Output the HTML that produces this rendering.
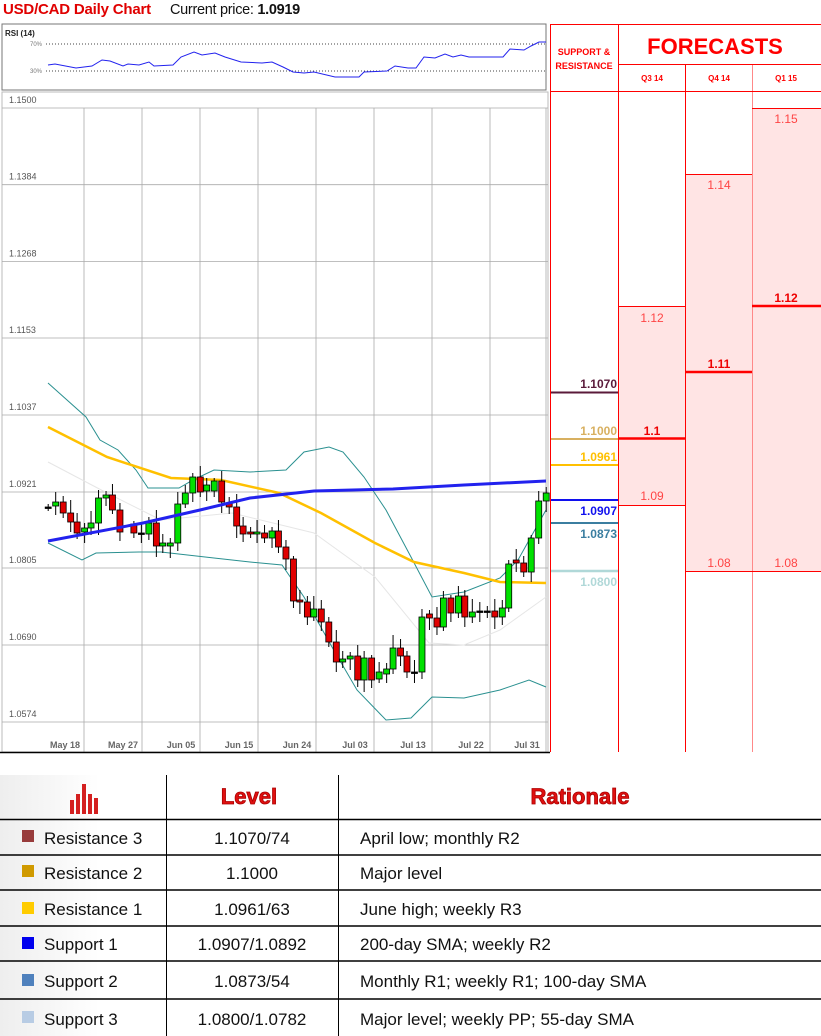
<!DOCTYPE html>
<html><head><meta charset="utf-8"><style>
body{margin:0;width:821px;height:1036px;background:#fff;position:relative;overflow:hidden;font-family:"Liberation Sans",sans-serif}
.a{position:absolute}
.nar{font-family:"Liberation Sans Narrow","Liberation Sans",sans-serif}
</style></head><body>
<div class="a" style="left:3px;top:1px;font-size:15px;font-weight:bold;color:#e00000;letter-spacing:-0.2px" >USD/CAD Daily Chart</div>
<div class="a" style="left:170px;top:2px;font-size:14.5px;color:#111;letter-spacing:-0.3px">Current price: <b>1.0919</b></div>

<svg class="a" style="left:0;top:0" width="821" height="760" id="s">
<rect x="2" y="24" width="544" height="66" fill="#fff" stroke="#777" stroke-width="1"/>
<text x="5" y="36" font-size="8" font-weight="bold" fill="#222">RSI (14)</text>
<text x="30" y="46" font-size="6" fill="#777">70%</text>
<text x="30" y="73" font-size="6" fill="#777">30%</text>
<line x1="46" y1="44" x2="546" y2="44" stroke="#444" stroke-dasharray="1,2"/>
<line x1="46" y1="71" x2="546" y2="71" stroke="#444" stroke-dasharray="1,2"/>
<polyline fill="none" stroke="#2222ee" stroke-width="1" points="48,65 55,64 76,68 92,66 102,60 110,61 123,66 128,64 139,65 149,62 154,66 173,65 181,57 194,52 202,55 215,53 225,57 241,62 262,63 272,62 283,67 293,72 304,73 314,72 335,77 351,77 359,77 364,72 387,71 395,66 408,68 416,68 424,57 435,58 445,54 453,57 461,55 469,57 503,57 510,49 524,50 531,46 539,42 546,42"/>
<g id="grid"></g>
<line x1="0" y1="752.5" x2="550" y2="752.5" stroke="#000" stroke-width="1.5"/>
<polyline fill="none" stroke="#e6e6e6" stroke-width="1" points="48,462 107,493 161,520 232,513 314,533 375,577 429,643 464,645 500,630 546,597"/>
<polyline fill="none" stroke="#2a9090" stroke-width="1" points="48,383 86,417 100,440 118,450 136,470 148,488 179,488 193,480 214,470 250,472 286,470 304,452 329,447 343,452 364,477 386,510 411,557 432,597 464,592 500,578 518,560 546,510"/>
<polyline fill="none" stroke="#2a9090" stroke-width="1" points="48,543 82,560 96,553 139,552 161,552 214,558 250,562 282,565 304,597 332,647 357,690 386,720 411,718 432,697 464,698 500,690 529,680 546,687"/>
<polyline fill="none" stroke="#ffc000" stroke-width="2.5" points="48,427 107,457 171,478 221,480 279,493 321,513 375,543 414,562 464,573 500,582 546,583"/>
<g id="c"></g>
<polyline fill="none" stroke="#2222ee" stroke-width="3" points="48,541 143,523 200,510 250,498 314,491 393,489 464,485 546,481"/>
<rect x="618" y="306" width="67" height="200" fill="#ffe4e4"/>
<rect x="685" y="174" width="67" height="398" fill="#ffe4e4"/>
<rect x="752" y="108" width="69" height="464" fill="#ffe4e4"/>
<g stroke="#f00" stroke-width="1">
<line x1="550.5" y1="24" x2="550.5" y2="752"/>
<line x1="618.5" y1="24" x2="618.5" y2="752"/>
<line x1="685.5" y1="64" x2="685.5" y2="752"/>
<line x1="752.5" y1="64" x2="752.5" y2="752" stroke="#f88"/>
<line x1="550" y1="24.5" x2="821" y2="24.5"/>
<line x1="618" y1="64.5" x2="821" y2="64.5"/>
<line x1="550" y1="91.5" x2="821" y2="91.5"/>
<line x1="618" y1="306.5" x2="685" y2="306.5"/>
<line x1="618" y1="505.5" x2="685" y2="505.5"/>
<line x1="685" y1="174.5" x2="752" y2="174.5"/>
<line x1="685" y1="571.5" x2="821" y2="571.5"/>
<line x1="752" y1="108.5" x2="821" y2="108.5"/>
</g>
<g stroke="#f00" stroke-width="2.5">
<line x1="618" y1="438.5" x2="685" y2="438.5"/>
<line x1="685" y1="372" x2="752" y2="372"/>
<line x1="752" y1="306" x2="821" y2="306"/>
</g>
<g font-size="12" fill="#f44" text-anchor="middle">
<text x="652" y="322">1.12</text><text x="652" y="500">1.09</text>
<text x="719" y="189">1.14</text><text x="719" y="567">1.08</text>
<text x="786" y="123">1.15</text><text x="786" y="567">1.08</text>
</g>
<g font-size="12" fill="#e00" font-weight="bold" text-anchor="middle">
<text x="652" y="435">1.1</text><text x="719" y="368">1.11</text><text x="786" y="302">1.12</text>
</g>
<g stroke-width="2">
<line x1="551" y1="392.5" x2="618" y2="392.5" stroke="#5a1a3a"/>
<line x1="551" y1="439" x2="618" y2="439" stroke="#d8b060"/>
<line x1="551" y1="465" x2="618" y2="465" stroke="#ffc000"/>
<line x1="551" y1="500" x2="618" y2="500" stroke="#1010ee"/>
<line x1="551" y1="523" x2="618" y2="523" stroke="#3b7ea0"/>
<line x1="551" y1="571" x2="618" y2="571" stroke="#b0d8d8" stroke-width="2.5"/>
</g>
<g font-size="12" font-weight="bold" text-anchor="end">
<text x="617" y="388" fill="#5a1a3a">1.1070</text>
<text x="617" y="435" fill="#d8b060">1.1000</text>
<text x="617" y="461" fill="#ffc000">1.0961</text>
<text x="617" y="515" fill="#1010ee">1.0907</text>
<text x="617" y="538" fill="#3b7ea0">1.0873</text>
<text x="617" y="586" fill="#b0d8d8">1.0800</text>
</g>
<g font-weight="bold" fill="#f00" text-anchor="middle">
<text x="584" y="55" font-size="9">SUPPORT &amp;</text>
<text x="584" y="69" font-size="9">RESISTANCE</text>
<text x="715" y="54" font-size="22" class="nar">FORECASTS</text>
<text x="652" y="81" font-size="8">Q3 14</text>
<text x="719" y="81" font-size="8">Q4 14</text>
<text x="786" y="81" font-size="8">Q1 15</text>
</g>
</svg>

<div class="a" style="left:0;top:775px;width:166px;height:261px;background:linear-gradient(90deg,#eee,#fff 60%)"></div>
<svg class="a" style="left:0;top:760px" width="821" height="276">
<g fill="#d42020"><rect x="70" y="40" width="4" height="14"/><rect x="76" y="34" width="4" height="20"/><rect x="82" y="24" width="4" height="30"/><rect x="88" y="34" width="4" height="20"/><rect x="94" y="38" width="4" height="16"/></g>
<g stroke="#000" stroke-width="1">
<line x1="166.5" y1="15" x2="166.5" y2="276"/><line x1="338.5" y1="15" x2="338.5" y2="276"/>
</g>
<g stroke="#000" stroke-width="1.5">
<line x1="0" y1="59.5" x2="821" y2="59.5"/><line x1="0" y1="95" x2="821" y2="95"/>
<line x1="0" y1="130" x2="821" y2="130"/><line x1="0" y1="166" x2="821" y2="166"/>
<line x1="0" y1="201" x2="821" y2="201"/><line x1="0" y1="239" x2="821" y2="239"/>
</g>
<g font-family="Liberation Sans" font-weight="900" fill="#e01010" stroke="#a00" stroke-width="0.8" font-size="22" text-anchor="middle">
<text x="249" y="44">Level</text><text x="580" y="44">Rationale</text>
</g>
<g font-size="17" fill="#111" font-family="Liberation Sans Narrow,Liberation Sans,sans-serif">
<rect x="22" y="70" width="12" height="12" fill="#983c3c"/><text x="44" y="84">Resistance 3</text><text x="252" y="84" text-anchor="middle">1.1070/74</text><text x="360" y="84">April low; monthly R2</text>
<rect x="22" y="105" width="12" height="12" fill="#d09a00"/><text x="44" y="119">Resistance 2</text><text x="252" y="119" text-anchor="middle">1.1000</text><text x="360" y="119">Major level</text>
<rect x="22" y="142" width="12" height="12" fill="#ffcc00"/><text x="44" y="155">Resistance 1</text><text x="252" y="155" text-anchor="middle">1.0961/63</text><text x="360" y="155">June high; weekly R3</text>
<rect x="22" y="177" width="12" height="12" fill="#0000ee"/><text x="44" y="190">Support 1</text><text x="252" y="190" text-anchor="middle">1.0907/1.0892</text><text x="360" y="190">200-day SMA; weekly R2</text>
<rect x="22" y="214" width="12" height="12" fill="#4f81bd"/><text x="44" y="227">Support 2</text><text x="252" y="227" text-anchor="middle">1.0873/54</text><text x="360" y="227">Monthly R1; weekly R1; 100-day SMA</text>
<rect x="22" y="251" width="12" height="12" fill="#b8cce4"/><text x="44" y="265">Support 3</text><text x="252" y="265" text-anchor="middle">1.0800/1.0782</text><text x="360" y="265">Major level; weekly PP; 55-day SMA</text>
</g>
</svg>

<script>
var NS="http://www.w3.org/2000/svg";
function el(p,t,a){var e=document.createElementNS(NS,t);for(var k in a)e.setAttribute(k,a[k]);if(a.txt){e.textContent=a.txt;e.removeAttribute('txt');}p.appendChild(e);return e;}
var g=document.getElementById('grid');
el(g,'rect',{x:2,y:92,width:546,height:660,fill:'none',stroke:'#bbb'});
var ys=[108,184.7,261.4,338,415,492,568,645,722],lb=['1.1500','1.1384','1.1268','1.1153','1.1037','1.0921','1.0805','1.0690','1.0574'];
ys.forEach(function(y,i){el(g,'line',{x1:2,y1:y,x2:548,y2:y,stroke:'#aaa','stroke-width':0.8});el(g,'text',{x:9,y:y-5,'font-size':9,fill:'#555',txt:lb[i]});});
var xs=[84,142,200,258,316,374,432,490,546];
xs.forEach(function(x){el(g,'line',{x1:x,y1:108,x2:x,y2:752,stroke:'#aaa','stroke-width':0.8});});
var dl=['May 18','May 27','Jun 05','Jun 15','Jun 24','Jul 03','Jul 13','Jul 22','Jul 31'];
dl.forEach(function(d,i){el(g,'text',{x:xs[i]-19,y:748,'font-size':9,'font-weight':'bold',fill:'#666','text-anchor':'middle',txt:d});});
var C=[[45,507,507],[52,506,502],[59,502,513],[66,513,522],[72,522,533],[79,532,528],[85,528,523],[92,523,498],[99,498,495],[105,495,510],[112,510,532],[125,524,533],[132,533,533],[139,534,523],[146,523,546],[152,546,543],[159,546,543],[166,543,504],[173,504,493],[180,493,477],[187,477,492],[193,491,485],[200,491,481],[207,481,502],[214,503,507],[221,507,526],[227,526,534],[234,532,534],[240,534,532],[247,533,538],[254,538,531],[260,531,547],[267,547,559],[274,559,601],[280,600,602],[287,602,617],[293,617,609],[300,609,622],[307,622,642],[314,642,662],[320,662,659],[327,659,656],[334,656,680],[340,680,658],[347,658,680],[354,679,672],[361,674,669],[367,669,648],[374,648,656],[380,656,672],[387,672,672],[394,672,617],[401,614,618],[408,618,627],[414,627,598],[421,598,613],[428,613,596],[434,596,617],[441,617,612],[448,611,611],[455,611,611],[462,611,617],[469,617,608],[475,608,564],[482,560,563],[489,563,572],[496,572,538],[503,538,501],[510,501,493]];
var c=document.getElementById('c');
C.forEach(function(d,i){var x=d[0]*1.071,o=d[1],cl=d[2],t=Math.min(o,cl),b=Math.max(o,cl);var w=3+((i*7)%11);
el(c,'line',{x1:x,y1:t-w,x2:x,y2:b+4+(i*5)%9,stroke:'#000','stroke-width':1});
el(c,'rect',{x:x-3,y:t,width:6,height:Math.max(b-t,1.5),fill:cl<o?'#00e000':(cl>o?'#e00000':'#000'),stroke:'#000','stroke-width':0.8});});
</script>
</body></html>
